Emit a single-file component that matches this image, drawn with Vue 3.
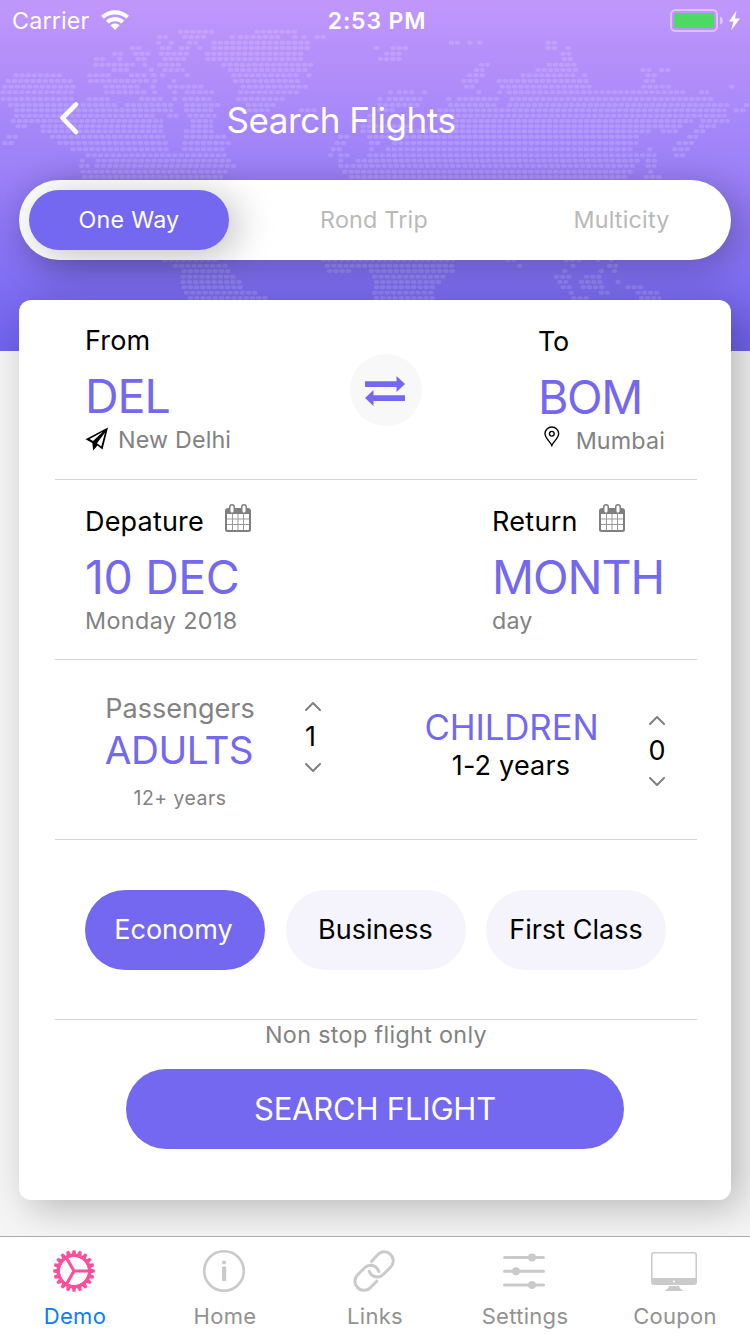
<script setup>
import { ref } from 'vue'

const trip = ref('One Way')
const trips = ['One Way', 'Rond Trip', 'Multicity']
const cabin = ref('Economy')
const cabins = ['Economy', 'Business', 'First Class']
const tabs = ['Demo', 'Home', 'Links', 'Settings', 'Coupon']

// Dotted world map: each row is [y, start, end, start, end, ...] on a 2250-unit wide grid
const mapRows = [
  [95, 532, 645, 762, 895],
  [111, 470, 505, 545, 625, 687, 705, 712, 850, 875, 888, 903, 916, 942, 978],
  [128, 467, 482, 505, 520, 560, 595, 633, 940, 1345, 1380, 1400, 1418, 1430, 1450, 1635, 1672],
  [144, 388, 425, 478, 515, 535, 570, 590, 605, 633, 940, 1120, 1140, 1170, 1225, 1635, 1672, 1695, 1713],
  [161, 335, 370, 398, 450, 475, 580, 613, 920, 1150, 1208, 1680, 1715],
  [177, 280, 315, 350, 368, 405, 440, 485, 560, 613, 920, 1132, 1212, 1683, 1720],
  [194, 278, 405, 425, 440, 470, 550, 662, 940, 1435, 1470, 1638, 1733],
  [210, 333, 388, 445, 460, 485, 555, 682, 930, 1420, 1455, 1605, 1737, 1920, 1955, 1975, 2012],
  [226, 38, 190, 260, 333, 385, 440, 452, 470, 478, 505, 552, 570, 692, 900, 918, 935, 1400, 1455, 1560, 1735, 1745, 1760, 1935, 1972],
  [243, 15, 228, 262, 450, 455, 470, 513, 528, 697, 905, 1382, 1437, 1488, 1770, 1930, 1967],
  [260, 5, 235, 308, 423, 450, 470, 500, 612, 720, 925, 1390, 1425, 1497, 1782, 1922, 2015, 2185, 2203],
  [277, 0, 230, 310, 440, 455, 470, 515, 530, 552, 645, 712, 905, 1163, 1180, 1188, 1245, 1265, 1282, 1428, 1443, 1490, 1505, 1518, 2058, 2095, 2128],
  [297, 0, 230, 258, 330, 415, 497, 515, 530, 545, 635, 707, 860, 1130, 1145, 1158, 1270, 1337, 1352, 1368, 1498, 1527, 2147],
  [315, 22, 230, 240, 355, 372, 525, 550, 662, 735, 830, 1130, 1260, 1342, 1495, 1520, 2200, 2230, 2250],
  [331, 40, 520, 550, 640, 720, 810, 895, 960, 1130, 1190, 1310, 2180, 2200, 2250],
  [347, 40, 465, 500, 540, 560, 650, 1100, 1125, 1310, 2180],
  [363, 30, 490, 570, 640, 1080, 1125, 1360, 2080, 2100, 2190],
  [379, 45, 95, 120, 490, 570, 640, 1080, 1230, 1360, 2048, 2095, 2150],
  [394, 120, 490, 550, 655, 1080, 1960, 1980, 2035, 2080, 2120],
  [410, 18, 55, 148, 497, 550, 685, 1012, 1050, 1100, 1930, 2060, 2095],
  [429, 5, 42, 170, 515, 545, 700, 1002, 1040, 1105, 1155, 1175, 1915, 2028, 2083],
  [448, 210, 520, 545, 680, 990, 1030, 1105, 1120, 1155, 1910, 1940, 1957, 2015, 2070],
  [466, 255, 680, 983, 1000, 1013, 1050, 1100, 1970, 2020, 2060],
  [482, 238, 255, 285, 705, 1013, 1030, 1065, 1920, 1935, 1975],
  [498, 235, 270, 282, 720, 1013, 1905, 1935, 1970],
  [515, 240, 683, 1025, 1900, 1943, 1960],
  [531, 245, 670, 1045, 1895, 1930, 1985],
  [780, 485, 655, 960, 1365, 1515, 1550, 1690, 1745, 1785, 1800, 1825, 1840],
  [797, 517, 690, 973, 1375, 1550, 1565, 1710, 1722, 1820, 1855],
  [813, 543, 697, 980, 1055, 1105, 1370, 1685, 1700, 1795, 1810, 1835, 1850],
  [830, 540, 713, 1115, 1343, 1660, 1715, 1750, 1805],
  [846, 540, 732, 1120, 1325, 1670, 1705, 1735, 1808, 1845, 1860],
  [862, 543, 733, 1120, 1315, 1680, 1715, 1740, 1820, 1875, 1930],
  [878, 550, 780, 1115, 1307, 1705, 1720, 1795, 1830, 1905, 1980],
  [894, 562, 810, 1120, 1305, 1712, 1767, 1915, 1985],
]
const mapPath = mapRows
  .map(([y, ...xs]) => {
    let d = ''
    for (let i = 0; i < xs.length; i += 2) d += `M${xs[i] + 7} ${y}H${Math.max(xs[i + 1] - 6, xs[i] + 11)}`
    return d
  })
  .join('')

const teeth = Array.from({ length: 20 }, (_, i) => i * 18)
</script>

<template>
  <main class="screen">
    <div class="sky">
      <svg class="map" viewBox="0 0 2250 1053" aria-hidden="true">
        <path :d="mapPath" />
      </svg>
    </div>

    <div class="status">
      <div class="side">
        <span class="carrier">Carrier</span>
        <svg class="wifi" viewBox="0 0 28 20">
          <path d="M0 5.8C7.8-1.7 20.2-1.7 28 5.8L25.1 8.8C19 3.2 9 3.2 2.9 8.8Z" />
          <path d="M4.8 10.7C10 5.9 18 5.9 23.2 10.7L20.3 13.6C16.8 10.4 11.2 10.4 7.7 13.6Z" />
          <path d="M9.4 15.3C12 13 16 13 18.6 15.3L14 20Z" />
        </svg>
      </div>
      <span class="clock">2:53 PM</span>
      <div class="side end">
        <svg class="battery" viewBox="0 0 72 24">
          <rect x="1" y="1" width="46" height="21" rx="4.5" fill="none" stroke="#fff" stroke-opacity=".45" stroke-width="2" />
          <path d="M50 7.5Q53 8.5 53 11.5T50 15.500Z" fill="#fff" fill-opacity=".45" />
          <rect x="4" y="4" width="40" height="15" rx="1.500" fill="#4cd964" />
          <path d="M66.500 1.500L59 12.500H63.500L61 21.500L70 9.500H65Z" fill="#fff" />
        </svg>
      </div>
    </div>

    <header class="nav">
      <svg class="back" viewBox="0 0 20 34"><path d="M17 3.500L3.500 17L17 31" /></svg>
      <h1>Search Flights</h1>
    </header>

    <nav class="trips">
      <button v-for="(t, i) in trips" :key="t" :class="['trip', 'trip' + i, { on: t === trip }]" @click="trip = t">{{ t }}</button>
    </nav>

    <section class="card">
      <div class="row">
        <div class="leg from">
          <span class="label l-from">From</span>
          <span class="big b-del">DEL</span>
          <span class="sub s-del">
            <svg class="plane" viewBox="0 0 24 24">
              <path fill-rule="evenodd" d="M23 .5L17.500 22.500L12.500 18.500L8.200 23.500L7.300 16L.5 12.200ZM18 4.700L4.600 12L8 14ZM20 5.500L12 16.200L16.300 19.500Z" />
            </svg>
            <span>New Delhi</span>
          </span>
        </div>
        <button class="swap" aria-label="Swap">
          <svg viewBox="0 0 40 30">
            <path d="M0 5.200H31.500V0L40 8L31.500 16V11H0ZM40 19.200H8.500V14L0 22L8.500 30V25H40Z" />
          </svg>
        </button>
        <div class="leg to">
          <span class="label l-to">To</span>
          <span class="big b-bom">BOM</span>
          <span class="sub s-bom">
            <svg class="pin" viewBox="0 0 16 21">
              <path d="M8 19.600C6.500 15.800 1 12.500 1 7.500A7 6.700 0 0 1 15 7.500C15 12.500 9.500 15.800 8 19.600Z" />
              <circle cx="8" cy="7.700" r="2.400" />
            </svg>
            <span>Mumbai</span>
          </span>
        </div>
      </div>

      <div class="row">
        <div class="leg depart">
          <span class="label l-dep">Depature
            <svg class="cal" viewBox="0 0 26 28">
              <path d="M3 4H23Q26 4 26 7V25.500Q26 28 23.500 28H2.500Q0 28 0 25.500V7Q0 4 3 4ZM2 10V25Q2 26 3 26H23Q24 26 24 25V10Z" fill-rule="evenodd" />
              <path class="grid" d="M2 15H24M2 20.500H24M7.500 10V26M13 10V26M18.500 10V26" />
              <path class="ring" d="M7 3V7M19 3V7" /><path class="hole" d="M7 3V7M19 3V7" />
            </svg>
          </span>
          <span class="big b-dec">10 DEC</span>
          <span class="sub s-mon">Monday 2018</span>
        </div>
        <div class="leg return">
          <span class="label l-ret">Return
            <svg class="cal" viewBox="0 0 26 28">
              <path d="M3 4H23Q26 4 26 7V25.500Q26 28 23.500 28H2.500Q0 28 0 25.500V7Q0 4 3 4ZM2 10V25Q2 26 3 26H23Q24 26 24 25V10Z" fill-rule="evenodd" />
              <path class="grid" d="M2 15H24M2 20.500H24M7.500 10V26M13 10V26M18.500 10V26" />
              <path class="ring" d="M7 3V7M19 3V7" /><path class="hole" d="M7 3V7M19 3V7" />
            </svg>
          </span>
          <span class="big b-mon">MONTH</span>
          <span class="sub s-day">day</span>
        </div>
      </div>

      <div class="row people">
        <div class="who adults">
          <span class="pass">Passengers</span>
          <span class="kind">ADULTS</span>
          <span class="age">12+ years</span>
        </div>
        <div class="step first">
          <svg viewBox="0 0 16 10"><path d="M1 9L8 2L15 9" /></svg>
          <span>1</span>
          <svg viewBox="0 0 16 10"><path d="M1 1L8 8L15 1" /></svg>
        </div>
        <div class="who kids">
          <span class="kind">CHILDREN</span>
          <span class="age">1-2 years</span>
        </div>
        <div class="step second">
          <svg viewBox="0 0 16 10"><path d="M1 9L8 2L15 9" /></svg>
          <span>0</span>
          <svg viewBox="0 0 16 10"><path d="M1 1L8 8L15 1" /></svg>
        </div>
      </div>

      <div class="row cabins">
        <button v-for="c in cabins" :key="c" :class="['cabin', { on: c === cabin }]" @click="cabin = c">{{ c }}</button>
      </div>

      <p class="nonstop">Non stop flight only</p>
      <button class="search">SEARCH FLIGHT</button>
    </section>

    <footer class="tabbar">
      <a v-for="(t, i) in tabs" :key="t" :class="['tab', 'tab' + i]">
        <svg v-if="i === 0" class="icon gear" viewBox="0 0 42 42">
          <circle cx="21" cy="21" r="15.700" />
          <path d="M21 21H36M21 21L13.500 8M21 21L13.500 34" />
          <path v-for="a in teeth" :key="a" class="tooth" d="M35 18.200L41.800 19.600V22.400L35 23.800Z" :transform="`rotate(${a} 21 21)`" />
        </svg>
        <svg v-else-if="i === 1" class="icon info" viewBox="0 0 42 42">
          <circle cx="21" cy="21" r="19.800" />
          <circle class="solid" cx="21" cy="12.500" r="2.100" />
          <path class="solid" d="M19 16.500H23.200V31H19Z" />
        </svg>
        <svg v-else-if="i === 2" class="icon link" viewBox="0 0 42 42">
          <path d="M18.500 11.500L24.500 5C28 1 34 .7 37.500 4.400C41 8 41.200 13.500 37.500 17.300L30.500 24.300C26 28.800 18.500 27.500 16.200 21.200" />
          <path d="M25.800 21.500C23.500 15 16.500 13.500 12 17.500L4.700 24.700C.9 28.500 1 34 4.600 37.600C8 41.200 14 41.100 17.500 37.500L23.800 31.200" />
        </svg>
        <svg v-else-if="i === 3" class="icon sliders" viewBox="0 0 42 42">
          <path d="M1.500 7.500H40.500M1.500 21.200H40.500M1.500 35H40.500" />
          <circle cx="29" cy="7.500" r="4" /><circle cx="13" cy="21.200" r="4" /><circle cx="29" cy="35" r="4" />
        </svg>
        <svg v-else class="icon monitor" viewBox="0 0 46 42">
          <path fill-rule="evenodd" d="M3 2H43Q46 2 46 5V32Q46 35 43 35H3Q0 35 0 32V5Q0 2 3 2ZM1.500 5V28H44.500V5Q44.500 3.500 43 3.500H3Q1.500 3.500 1.500 5ZM22 31.500A1 1 0 0 0 24 31.500A1 1 0 0 0 22 31.500ZM18 36H28Q28.500 39 33 41H13Q17.500 39 18 36Z" />
        </svg>
        <span>{{ t }}</span>
      </a>
    </footer>
  </main>
</template>

<style>
body { background: #f5f5f5; }
</style>

<style scoped>
* { box-sizing: border-box; }
.screen {
  position: relative;
  width: 750px;
  height: 1334px;
  overflow: hidden;
  display: flex;
  flex-direction: column;
  background: #f5f5f5;
  font-family: Inter, "Liberation Sans", sans-serif;
  white-space: nowrap;
}
button { border: 0; padding: 0; font-family: inherit; background: none; }
.sky {
  position: absolute;
  inset: 0 0 auto;
  height: 351px;
  background: linear-gradient(#c197fb, #9e82f8 46%, #6f63f0);
}
.map { display: block; width: 750px; height: 351px; }
.map path {
  fill: none;
  stroke: #fff;
  stroke-opacity: .15;
  stroke-width: 12;
  stroke-linecap: round;
  stroke-dasharray: 5 13.600;
}
.status, .nav, .trips, .card, .tabbar { position: relative; }
.status {
  height: 40px;
  display: flex;
  align-items: center;
  justify-content: space-between;
  padding: 0 8px 0 12px;
  color: #fff;
}
.side { width: 230px; display: flex; align-items: center; }
.side.end { justify-content: flex-end; }
.carrier { font-size: 23.300px; letter-spacing: .15px; line-height: 30px; margin-top: 1px; }
.wifi { width: 28px; height: 20px; margin-left: 12px; fill: #fff; }
.clock { font-size: 23px; font-weight: 600; letter-spacing: .85px; line-height: 30px; margin-top: 1px; }
.battery { width: 72px; height: 24px; margin-top: 1px; }
.nav { height: 140px; display: flex; align-items: flex-start; padding: 61px 0 0 59px; }
.back { width: 20px; height: 34px; fill: none; stroke: #fff; stroke-width: 4.600; stroke-linecap: round; stroke-linejoin: round; }
h1 { margin: -4px 0 0 147.500px; font-size: 35px; font-weight: 400; line-height: 46px; color: #fff; letter-spacing: -.45px; }
.trips {
  flex: none;
  height: 80px;
  margin: 0 19px;
  padding: 10px;
  display: flex;
  justify-content: space-between;
  border-radius: 40px;
  background: #fff;
  box-shadow: 8px 8px 38px rgba(0, 0, 0, .25);
}
.trip { width: 200px; height: 60px; padding-bottom: 2px; border-radius: 30px; font-size: 23.300px; color: #b9b9b9; letter-spacing: .22px; }
.trip1 { padding-right: 2px; }
.trip2 { padding-left: 1px; }
.trip.on { background: #7468f0; color: #fff; box-shadow: 8px 6px 38px rgba(0, 0, 0, .26); }
.card {
  flex: none;
  height: 900px;
  margin: 40px 19px 0;
  padding: 0 34px 0 36px;
  border-radius: 12px;
  background: #fff;
  box-shadow: 10px 8px 38px rgba(0, 0, 0, .25);
  display: flex;
  flex-direction: column;
}
.row {
  height: 180px;
  display: flex;
  justify-content: space-between;
  padding: 24px 32px 0 30px;
  border-bottom: 1px solid #d6d6d6;
}
.leg { display: flex; flex-direction: column; }
.from { width: 265px; margin-top: -1px; }
.to { width: 127px; }
.return { width: 173px; }
.label { display: flex; align-items: center; height: 34px; font-size: 27px; color: #000; margin-bottom: 11px; letter-spacing: .18px; }
.l-to { letter-spacing: -.3px; }
.l-ret { letter-spacing: .3px; }
.big { height: 56px; line-height: 56px; font-size: 46.500px; color: #7468f0; }
.b-del { letter-spacing: -1px; }
.b-bom { letter-spacing: -1.400px; }
.b-dec { letter-spacing: -.4px; }
.b-mon { letter-spacing: -1px; }
.sub { display: flex; align-items: center; height: 30px; font-size: 23.300px; color: #828282; letter-spacing: .15px; }
.s-mon { letter-spacing: .4px; }
.plane { width: 24px; height: 24px; margin-right: 9px; }
.pin { width: 16px; height: 21px; margin: -7px 16px 0 6px; fill: none; stroke: #000; stroke-width: 1.400; }
.swap { width: 72px; height: 72px; margin: 30px auto 0 0; border-radius: 50%; background: #f8f8f8; display: flex; align-items: center; justify-content: center; }
.swap svg { width: 40px; height: 30px; margin: 2px 2px 0 0; fill: #7468f0; }
.cal { width: 26px; height: 28px; margin: -6px 0 0 21px; fill: #808080; }
.cal .grid { stroke: #999; stroke-width: 1; fill: none; }
.cal .ring { stroke: #808080; stroke-width: 6; stroke-linecap: round; }
.cal .hole { stroke: #fff; stroke-width: 3; stroke-linecap: round; }
.people { justify-content: flex-start; padding: 0; }
.who { display: flex; flex-direction: column; align-items: center; }
.adults { width: 150px; margin-left: 50px; padding-top: 32px; }
.pass { font-size: 27px; line-height: 34px; color: #828282; }
.kind { color: #7468f0; }
.adults .kind { font-size: 38.700px; line-height: 50px; margin: -1px 2px 0 0; letter-spacing: -.5px; }
.adults .age { font-size: 19.400px; line-height: 24px; margin-top: 11px; color: #828282; letter-spacing: .5px; }
.step { width: 16px; display: flex; flex-direction: column; align-items: center; font-size: 27px; }
.step svg { width: 16px; height: 10px; fill: none; stroke: #808080; stroke-width: 2; stroke-linecap: round; stroke-linejoin: round; }
.step span { line-height: 34px; margin: 9px 0; }
.first span { margin-right: 5px; }
.first { margin-left: 50px; padding-top: 41px; }
.kids { width: 176px; margin-left: 102px; padding-top: 45px; }
.kids .kind { font-size: 34.800px; line-height: 44px; letter-spacing: -.1px; margin-left: 1px; }
.kids .age { font-size: 27px; line-height: 34px; color: #000; letter-spacing: .2px; }
.second { margin-left: 50px; padding-top: 55px; }
.cabins { padding-top: 50px; padding-right: 31px; }
.cabin { width: 180px; height: 80px; padding-bottom: 2px; border-radius: 40px; background: #f5f3fb; color: #000; font-size: 27px; letter-spacing: .02px; }
.cabin.on { background: #7468f0; color: #fff; padding-right: 3px; }
.nonstop { margin: 0; line-height: 30px; text-align: center; font-size: 23.300px; color: #828282; letter-spacing: .35px; }
.search { width: 498px; height: 80px; margin: 19px 0 0 71px; padding-bottom: 2px; border-radius: 40px; background: #7468f0; color: #fff; font-size: 31px; letter-spacing: -.2px; }
.tabbar {
  flex: none;
  height: 98px;
  margin-top: 36px;
  display: flex;
  border-top: 1px solid #ababab;
  background: #fff;
}
.tab { flex: 1; display: flex; flex-direction: column; align-items: center; padding-top: 13px; font-size: 22px; color: #929292; letter-spacing: .3px; }
.tab0 { color: #087dff; }
.tab span { line-height: 28px; margin-top: 10px; }
.icon { width: 42px; height: 42px; margin-right: 2px; fill: none; stroke: #cacaca; }
.gear { stroke: #ff4f9c; stroke-width: 3.200; }
.gear .tooth { fill: #ff4f9c; stroke: none; }
.info { stroke-width: 2.600; }
.solid { fill: #cacaca; stroke: none; }
.link { stroke-width: 3; stroke-linecap: round; }
.sliders { stroke-width: 3; stroke-linecap: round; }
.sliders circle { fill: #cacaca; stroke: none; }
.monitor { width: 46px; fill: #cacaca; stroke: none; }
</style>
